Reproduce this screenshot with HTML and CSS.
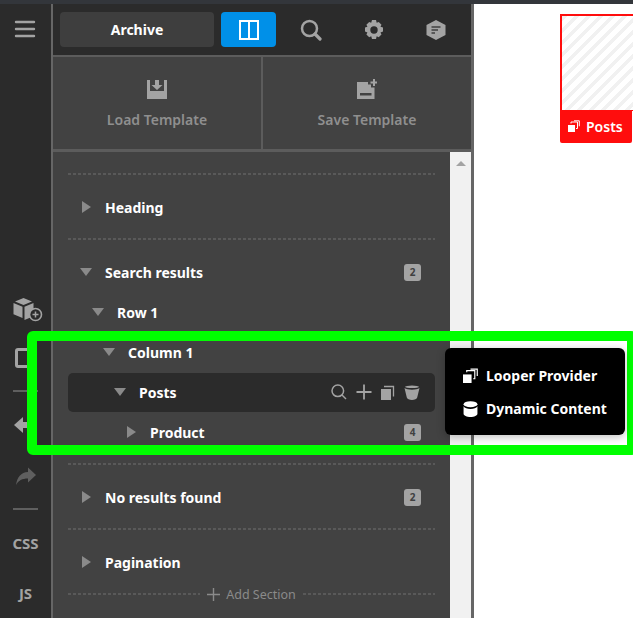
FILE: index.html
```html
<!DOCTYPE html>
<html lang="en">
<head>
<meta charset="utf-8">
<title>Archive</title>
<link rel="stylesheet" href="styles.css">
</head>
<body>
<div class="app">
  <div class="strip"></div>
  <div class="main">
    <nav class="rail">
      <button class="rail-btn menu" aria-label="Menu">
        <svg width="22" height="18" viewBox="0 0 22 18"><path d="M2 2h18M2 9h18M2 16h18" stroke="#a3a3a3" stroke-width="2.400" stroke-linecap="round"/></svg>
      </button>
      <div class="rail-lower">
        <button class="rail-btn cube" aria-label="Add element">
          <svg width="32" height="26" viewBox="0 0 32 26"><path d="M11.500 1l8.500 3.500-8.500 3.500-8.500-3.500zM1.500 6l9 3.800v11.200l-9-3.800zM12.500 9.800l9-3.800v6.200a7 7 0 0 0-3 8.300l-6 2.500z" fill="#a3a3a3"/><circle cx="23.500" cy="17.500" r="6" fill="none" stroke="#a3a3a3" stroke-width="1.600"/><path d="M23.500 14.500v6M20.500 17.500h6" stroke="#a3a3a3" stroke-width="1.500"/></svg>
        </button>
        <div class="square"></div>
        <div class="rail-line first"></div>
        <button class="rail-btn back" aria-label="Undo">
          <svg width="22" height="20" viewBox="0 0 22 20"><path d="M1 10l9-8v5h10v6h-10v5z" fill="#a3a3a3"/></svg>
        </button>
        <button class="rail-btn redo" aria-label="Redo">
          <svg width="22" height="20" viewBox="0 0 22 20"><path d="M21 8l-8-7.500v4.500c-7 .5-11 5-12 13 2.500-4.500 6-6.500 12-6.500v4z" fill="#5f5f5f"/></svg>
        </button>
        <div class="rail-line second"></div>
        <div class="rail-text css">CSS</div>
        <div class="rail-text js">JS</div>
      </div>
    </nav>
    <section class="panel">
      <header class="topbar">
        <button class="archive">Archive</button>
        <button class="layout" aria-label="Layout">
          <svg width="20" height="20" viewBox="0 0 20 20"><path d="M1 1h18v18h-18zM10 1v18" fill="none" stroke="#fff" stroke-width="2"/></svg>
        </button>
        <button class="tool search" aria-label="Search">
          <svg width="22" height="22" viewBox="0 0 22 22"><circle cx="9.500" cy="9.500" r="7.500" fill="none" stroke="#a3a3a3" stroke-width="2.500"/><path d="M15 15l5 5" stroke="#a3a3a3" stroke-width="3.200" stroke-linecap="round"/></svg>
        </button>
        <button class="tool gear" aria-label="Settings">
          <svg width="22" height="22" viewBox="0 0 22 22"><path fill="#a3a3a3" fill-rule="evenodd" d="M9 1h4l.7 2.800 2-.9 2.800 2.800-1 2 2.500.9v4l-2.500.8 1 2.100-2.800 2.800-2-1-.7 2.700h-4l-.8-2.700-2 1-2.800-2.800 1-2.100-2.400-.8v-4l2.400-.9-1-2 2.800-2.800 2 .9zM11 7.300a3.700 3.700 0 1 0 0 7.400 3.700 3.700 0 0 0 0-7.400z"/></svg>
        </button>
        <button class="tool hex" aria-label="Notes">
          <svg width="20" height="22" viewBox="0 0 20 22"><path fill="#a3a3a3" d="M10 1l9.500 5v10l-9.500 5-9.500-5v-10z"/><path d="M5.500 8h9M5.500 11h6.500M5.500 14h3.500" stroke="#404040" stroke-width="1.500"/></svg>
        </button>
      </header>
      <div class="templates">
        <button class="template">
          <svg width="20" height="20" viewBox="0 0 20 20"><path fill="#a3a3a3" d="M0 1h3v11h14v-11h3v19h-20zM8 1h4v5h3.500l-5.500 5-5.500-5h3.500z"/></svg>
          <span>Load Template</span>
        </button>
        <button class="template">
          <svg width="20" height="20" viewBox="0 0 20 20"><path fill="#a3a3a3" d="M0 3h11v2.500h3v3h3.500v11.500h-17.500zM3 14v2.500h11.500v-2.500z"/><path d="M17 0v7M13.500 3.500h7" stroke="#a3a3a3" stroke-width="2"/></svg>
          <span>Save Template</span>
        </button>
      </div>
      <div class="structure">
        <div class="tree">
          <div class="section">
            <div class="row lv0"><i class="caret right"></i><b>Heading</b></div>
          </div>
          <div class="section">
            <div class="row lv0 open"><i class="caret down"></i><b>Search results</b><em class="count">2</em></div>
            <div class="row lv1"><i class="caret down"></i><b>Row 1</b></div>
            <div class="row lv2"><i class="caret down"></i><b>Column 1</b></div>
            <div class="row lv3 active"><i class="caret down"></i><b>Posts</b>
              <span class="actions">
                <svg width="16" height="16" viewBox="0 0 16 16"><circle cx="6.800" cy="6.800" r="5.800" fill="none" stroke="#a3a3a3" stroke-width="1.500"/><path d="M11 11l4 4" stroke="#a3a3a3" stroke-width="1.500"/></svg>
                <svg width="16" height="16" viewBox="0 0 16 16"><path d="M8 .5v15M.5 8h15" stroke="#a3a3a3" stroke-width="1.800"/></svg>
                <svg width="14" height="15" viewBox="0 0 14 15"><path fill="#a3a3a3" d="M0 4h10v11h-10z"/><path d="M3 1.500h9.500v10" fill="none" stroke="#a3a3a3" stroke-width="1.300"/></svg>
                <svg width="16" height="15" viewBox="0 0 16 15"><path fill="#a3a3a3" d="M.5 3l2.300 9.500c.3 1.500 2.700 2.500 5.200 2.500s4.900-1 5.200-2.500l2.300-9.500c-1.500 1.200-4.300 1.700-7.500 1.700s-6-.5-7.500-1.700z"/><ellipse cx="8" cy="1.800" rx="7" ry="1.300" fill="#a3a3a3"/></svg>
              </span>
            </div>
            <div class="row lv4"><i class="caret right"></i><b>Product</b><em class="count">4</em></div>
          </div>
          <div class="section">
            <div class="row lv0"><i class="caret right"></i><b>No results found</b><em class="count">2</em></div>
          </div>
          <div class="section last">
            <div class="row lv0"><i class="caret right"></i><b>Pagination</b></div>
          </div>
          <div class="add-section">
            <span class="dash"></span>
            <svg width="13" height="13" viewBox="0 0 13 13"><path d="M6.500 0v13M0 6.500h13" stroke="#8a8a8a" stroke-width="1.400"/></svg>
            <span class="add-label">Add Section</span>
            <span class="dash"></span>
          </div>
        </div>
        <div class="scrollbar"><i class="up"></i></div>
      </div>
    </section>
    <div class="edge"></div>
    <main class="preview">
      <div class="element">
        <div class="hatch"></div>
        <div class="tag">
          <svg width="12" height="12" viewBox="0 0 12 12"><path fill="#fff" d="M0 5h7v7h-7z"/><path d="M3 3.500v-1.500h6.500v6.500h-1.500M6 .8h5.300v5.500" fill="none" stroke="#fff" stroke-width="1"/></svg>
          <span>Posts</span>
        </div>
      </div>
    </main>
  </div>
</div>
<div class="highlight"></div>
<div class="popup">
  <div class="popup-row">
    <svg width="15" height="15" viewBox="0 0 14 14"><path fill="#fff" d="M0 6h8v8h-8z"/><path d="M3.500 4v-1.500h7.500v7.500h-1.500M7 1h6.300v6.500" fill="none" stroke="#fff" stroke-width="1.100"/></svg>
    <span>Looper Provider</span>
  </div>
  <div class="popup-row">
    <svg width="15" height="16" viewBox="0 0 14 15"><ellipse cx="7" cy="3" rx="6.500" ry="2.800" fill="#fff"/><path fill="#fff" d="M.5 5c1 1.700 3.500 2.500 6.500 2.500s5.500-.8 6.500-2.500v7c0 1.700-3 3-6.500 3s-6.500-1.300-6.500-3z"/></svg>
    <span>Dynamic Content</span>
  </div>
</div>
</body>
</html>
```
FILE: styles.css
```css
* { box-sizing: border-box; }
html, body { margin: 0; height: 100%; overflow: hidden; background: #fff; }
body { font-family: "Noto Sans", "Open Sans", sans-serif; position: relative; }
button { font: inherit; border: 0; background: none; padding: 0; color: inherit; }
svg { display: block; }
.app { height: 618px; display: flex; flex-direction: column; }
.strip { height: 4px; background: #33363b; flex: none; }
.main { flex: 1; display: flex; min-height: 0; }

.rail { width: 53px; flex: none; background: #2b2b2b; border-right: 2px solid #666; display: flex; flex-direction: column; align-items: center; }
.rail-btn { display: flex; justify-content: center; align-items: center; }
.menu { margin: 16px 0 0 -2px; }
.rail-lower { display: flex; flex-direction: column; align-items: center; width: 100%; margin-top: 259px; }
.cube { margin-left: 4px; height: 26px; }
.square { width: 17px; height: 20px; border: 3px solid #a3a3a3; border-radius: 3px; margin: 25px 0 0 -4px; }
.rail-line { width: 25px; height: 2px; background: #5f5f5f; }
.rail-line.first { margin-top: 22px; }
.back { margin-top: 23px; margin-left: -4px; height: 20px; }
.redo { margin-top: 32px; height: 20px; }
.rail-line.second { margin-top: 21px; }
.rail-text { color: #a3a3a3; font-size: 15px; font-weight: 700; line-height: 20px; }
.css { margin-top: 23px; }
.js { margin-top: 30px; }

.panel { width: 418px; flex: none; display: flex; flex-direction: column; background: #424242; }
.topbar { height: 53px; flex: none; background: #2b2b2b; border-bottom: 2px solid #5c5c5c; display: flex; align-items: flex-start; padding: 8px 0 0 7px; }
.archive { width: 154px; height: 35px; border-radius: 4px; background: #3e3e3e; color: #fff; font-size: 14px; font-weight: 700; }
.layout { width: 55px; height: 35px; margin-left: 7px; border-radius: 4px; background: #0090e8; display: flex; align-items: center; justify-content: center; }
.tool { display: flex; justify-content: center; align-items: center; height: 35px; }
.search { width: 22px; margin-left: 24px; }
.gear { width: 22px; margin-left: 41px; }
.hex { width: 20px; margin-left: 41px; }

.templates { height: 95px; flex: none; display: grid; grid-template-columns: 208px 1fr; border-bottom: 3px solid; border-image: linear-gradient(#2f2f2f 33%, #5c5c5c 33%) 1; }
.template { display: flex; flex-direction: column; align-items: center; color: #8f8f8f; font-size: 14px; font-weight: 600; padding-top: 22px; gap: 11px; line-height: 20px; }
.template + .template { border-left: 2px solid #5c5c5c; }

.structure { flex: 1; min-height: 0; display: flex; }
.tree { flex: 1; padding: 21px 15px 0; }
.section { height: 65px; padding-top: 15px; background: repeating-linear-gradient(90deg, #595959 0 3px, transparent 3px 5px) top / 100% 2px no-repeat; }
.section:nth-child(2) { height: 225px; }
.section.last { height: 54px; }
.row { height: 40px; display: flex; align-items: center; color: #fff; font-size: 14px; padding-right: 14px; padding-bottom: 2px; }
.row b { font-weight: 700; }
.caret { display: block; flex: none; width: 0; height: 0; }
.caret.right { border-left: 9px solid #8a8a8a; border-top: 6px solid transparent; border-bottom: 6px solid transparent; margin-right: 14px; }
.caret.down { border-top: 8px solid #8a8a8a; border-left: 6px solid transparent; border-right: 6px solid transparent; margin-right: 13px; }
.lv0 { padding-left: 14px; }
.lv0.open { padding-left: 12px; }
.lv1 { padding-left: 24px; }
.lv2 { padding-left: 35px; }
.lv3 { padding-left: 46px; }
.lv4 { padding-left: 59px; }
.active { background: #2b2b2b; border-radius: 5px; padding-right: 5px; height: 39px; margin-bottom: 1px; padding-bottom: 1px; }
.count { margin-left: auto; width: 17px; height: 17px; border-radius: 3px; background: #a3a3a3; color: #404040; font-size: 10px; font-weight: 700; font-style: normal; display: flex; align-items: center; justify-content: center; }
.actions { margin-left: auto; display: flex; align-items: center; gap: 9px; padding-right: 10px; }
.add-section { display: flex; align-items: center; height: 24px; }
.dash { flex: 1; height: 2px; background: repeating-linear-gradient(90deg, #595959 0 3px, transparent 3px 5px); }
.add-section svg { margin: 0 6px 0 7px; }
.add-label { color: #8a8a8a; font-size: 12.500px; margin-right: 7px; }
.scrollbar { width: 21px; flex: none; background: #f1f1f1; padding-top: 9px; }
.up { display: block; width: 0; margin: 0 auto; border-bottom: 5px solid #a3a3a3; border-left: 5px solid transparent; border-right: 5px solid transparent; }

.edge { width: 3px; flex: none; background: #666; }
.preview { flex: 1; min-width: 0; background: #fff; padding: 10px 0 0 86px; overflow: hidden; }
.element { width: 100px; }
.hatch { height: 97px; border: 2px solid #ff0d0d; border-bottom-width: 1px; background: repeating-linear-gradient(135deg, #f1f1f1 0 4px, #fff 4px 8.500px); }
.tag { width: 72px; height: 32px; background: #ff0d0d; border-radius: 0 0 2px 2px; color: #fff; font-size: 14px; font-weight: 600; display: flex; align-items: center; padding: 0 0 2px 8px; gap: 6px; }

.highlight { position: absolute; left: 27px; top: 331px; width: 610px; height: 124px; border: 10px solid #00ff00; border-radius: 6px; }
.popup { position: absolute; left: 445px; top: 348px; width: 180px; height: 87px; background: #000; border-radius: 6px; box-shadow: 0 2px 8px rgba(0,0,0,.25); padding: 11px 0 0 18px; color: #fff; font-size: 14px; font-weight: 700; }
.popup-row { height: 33px; display: flex; align-items: center; gap: 8px; }
```
